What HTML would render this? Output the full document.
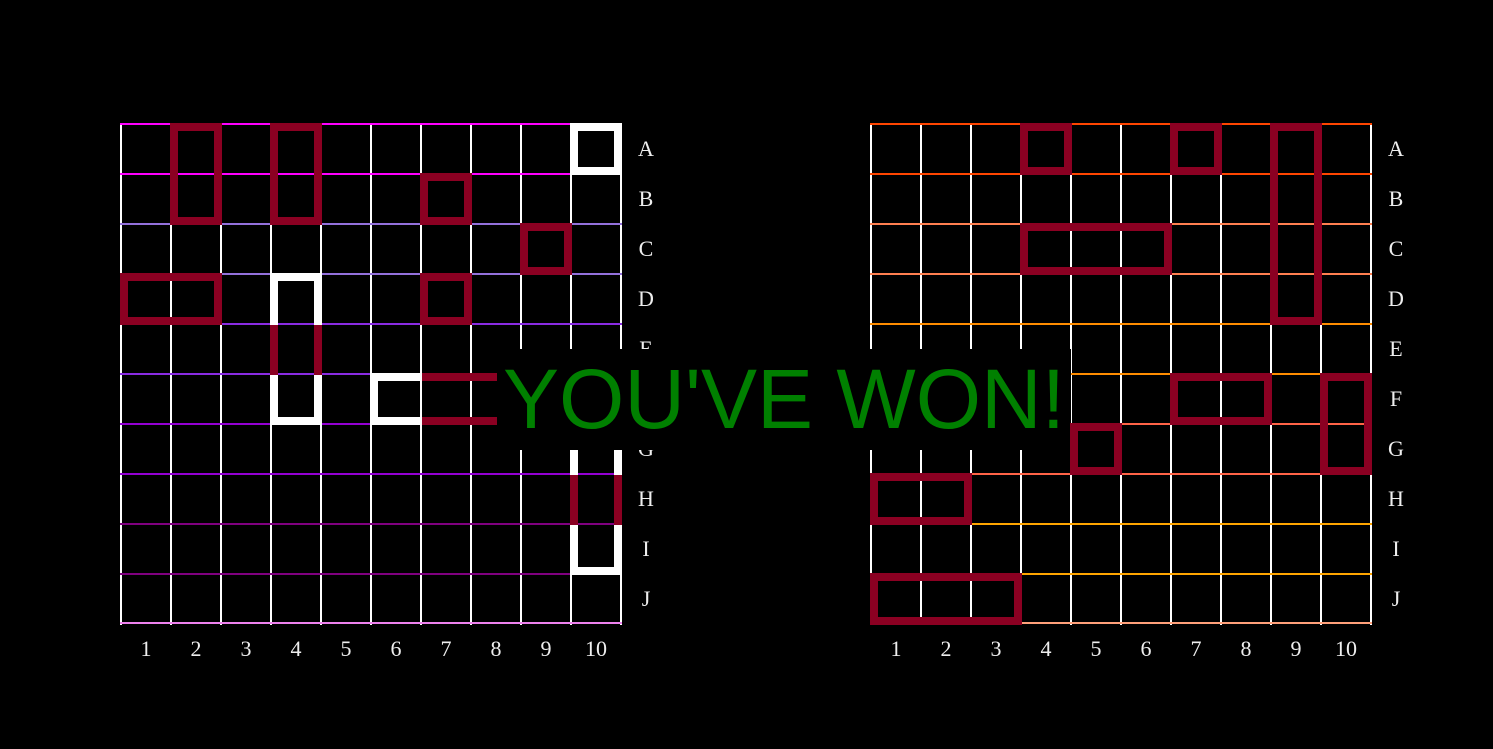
<!DOCTYPE html>
<html><head><meta charset="utf-8"><style>
html,body{margin:0;padding:0;background:#000;width:1493px;height:749px;overflow:hidden;position:relative}
div{position:absolute;box-sizing:border-box}
.v{width:2px;height:502px;background:#fff}
.h{height:2px;width:502px}
.s{border:8px solid #8b0022}
.w{border-color:#fff}
.lb{font-family:"Liberation Serif",serif;font-size:22px;color:#eee;width:40px;text-align:center;line-height:22px}
</style></head><body>
<!-- LEFT BOARD -->
<div class="v" style="left:120px;top:123px"></div><div class="v" style="left:170px;top:123px"></div><div class="v" style="left:220px;top:123px"></div><div class="v" style="left:270px;top:123px"></div><div class="v" style="left:320px;top:123px"></div><div class="v" style="left:370px;top:123px"></div><div class="v" style="left:420px;top:123px"></div><div class="v" style="left:470px;top:123px"></div><div class="v" style="left:520px;top:123px"></div><div class="v" style="left:570px;top:123px"></div><div class="v" style="left:620px;top:123px"></div>
<div class="h" style="left:120px;top:123px;background:#f0f"></div>
<div class="h" style="left:120px;top:173px;background:#f0f"></div>
<div class="h" style="left:120px;top:223px;background:#9370db"></div>
<div class="h" style="left:120px;top:273px;background:#9370db"></div>
<div class="h" style="left:120px;top:323px;background:#8a2be2"></div>
<div class="h" style="left:120px;top:373px;background:#8a2be2"></div>
<div class="h" style="left:120px;top:423px;background:#9400d3"></div>
<div class="h" style="left:120px;top:473px;background:#9400d3"></div>
<div class="h" style="left:120px;top:523px;background:#800080"></div>
<div class="h" style="left:120px;top:573px;background:#800080"></div>
<div class="h" style="left:120px;top:622px;background:#ee82ee"></div>
<!-- left ships -->
<div class="s" style="left:170px;top:123px;width:52px;height:102px"></div>
<div class="s" style="left:270px;top:123px;width:52px;height:102px"></div>
<div class="s w" style="left:570px;top:123px;width:52px;height:52px"></div>
<div class="s" style="left:420px;top:173px;width:52px;height:52px"></div>
<div class="s" style="left:520px;top:223px;width:52px;height:52px"></div>
<div class="s" style="left:120px;top:273px;width:102px;height:52px"></div>
<div class="s" style="left:420px;top:273px;width:52px;height:52px"></div>
<div class="s w" style="left:270px;top:273px;width:52px;height:52px;border-bottom:0"></div>
<div class="s" style="left:270px;top:325px;width:52px;height:50px;border-top:0;border-bottom:0"></div>
<div class="s w" style="left:270px;top:375px;width:52px;height:50px;border-top:0"></div>
<div class="s w" style="left:370px;top:373px;width:52px;height:52px;border-right:0"></div>
<div class="s" style="left:422px;top:373px;width:100px;height:52px;border-left:0;border-right:0"></div>
<div class="s w" style="left:570px;top:423px;width:52px;height:52px;border-bottom:0"></div>
<div class="s" style="left:570px;top:475px;width:52px;height:50px;border-top:0;border-bottom:0"></div>
<div class="s w" style="left:570px;top:525px;width:52px;height:50px;border-top:0"></div>
<!-- RIGHT BOARD -->
<div class="v" style="left:870px;top:123px"></div><div class="v" style="left:920px;top:123px"></div><div class="v" style="left:970px;top:123px"></div><div class="v" style="left:1020px;top:123px"></div><div class="v" style="left:1070px;top:123px"></div><div class="v" style="left:1120px;top:123px"></div><div class="v" style="left:1170px;top:123px"></div><div class="v" style="left:1220px;top:123px"></div><div class="v" style="left:1270px;top:123px"></div><div class="v" style="left:1320px;top:123px"></div><div class="v" style="left:1370px;top:123px"></div>
<div class="h" style="left:870px;top:123px;background:#ff4500"></div>
<div class="h" style="left:870px;top:173px;background:#ff4500"></div>
<div class="h" style="left:870px;top:223px;background:#ff7f50"></div>
<div class="h" style="left:870px;top:273px;background:#ff7f50"></div>
<div class="h" style="left:870px;top:323px;background:#ff8c00"></div>
<div class="h" style="left:870px;top:373px;background:#ff8c00"></div>
<div class="h" style="left:870px;top:423px;background:#ff6347"></div>
<div class="h" style="left:870px;top:473px;background:#ff6347"></div>
<div class="h" style="left:870px;top:523px;background:#ffa500"></div>
<div class="h" style="left:870px;top:573px;background:#ffa500"></div>
<div class="h" style="left:870px;top:622px;background:#ffa07a"></div>
<div class="s" style="left:1020px;top:123px;width:52px;height:52px"></div>
<div class="s" style="left:1170px;top:123px;width:52px;height:52px"></div>
<div class="s" style="left:1270px;top:123px;width:52px;height:202px"></div>
<div class="s" style="left:1020px;top:223px;width:152px;height:52px"></div>
<div class="s" style="left:1170px;top:373px;width:102px;height:52px"></div>
<div class="s" style="left:1320px;top:373px;width:52px;height:102px"></div>
<div class="s" style="left:870px;top:473px;width:102px;height:52px"></div>
<div class="s" style="left:870px;top:573px;width:152px;height:52px"></div>
<!-- letters -->
<div class="lb" style="left:626px;top:138px">A</div><div class="lb" style="left:626px;top:188px">B</div><div class="lb" style="left:626px;top:238px">C</div><div class="lb" style="left:626px;top:288px">D</div><div class="lb" style="left:626px;top:338px">E</div><div class="lb" style="left:626px;top:388px">F</div><div class="lb" style="left:626px;top:438px">G</div><div class="lb" style="left:626px;top:488px">H</div><div class="lb" style="left:626px;top:538px">I</div><div class="lb" style="left:626px;top:588px">J</div>
<div class="lb" style="left:1376px;top:138px">A</div><div class="lb" style="left:1376px;top:188px">B</div><div class="lb" style="left:1376px;top:238px">C</div><div class="lb" style="left:1376px;top:288px">D</div><div class="lb" style="left:1376px;top:338px">E</div><div class="lb" style="left:1376px;top:388px">F</div><div class="lb" style="left:1376px;top:438px">G</div><div class="lb" style="left:1376px;top:488px">H</div><div class="lb" style="left:1376px;top:538px">I</div><div class="lb" style="left:1376px;top:588px">J</div>
<!-- numbers -->
<div class="lb" style="left:126px;top:638px">1</div><div class="lb" style="left:176px;top:638px">2</div><div class="lb" style="left:226px;top:638px">3</div><div class="lb" style="left:276px;top:638px">4</div><div class="lb" style="left:326px;top:638px">5</div><div class="lb" style="left:376px;top:638px">6</div><div class="lb" style="left:426px;top:638px">7</div><div class="lb" style="left:476px;top:638px">8</div><div class="lb" style="left:526px;top:638px">9</div><div class="lb" style="left:576px;top:638px">10</div>
<div class="lb" style="left:876px;top:638px">1</div><div class="lb" style="left:926px;top:638px">2</div><div class="lb" style="left:976px;top:638px">3</div><div class="lb" style="left:1026px;top:638px">4</div><div class="lb" style="left:1076px;top:638px">5</div><div class="lb" style="left:1126px;top:638px">6</div><div class="lb" style="left:1176px;top:638px">7</div><div class="lb" style="left:1226px;top:638px">8</div><div class="lb" style="left:1276px;top:638px">9</div><div class="lb" style="left:1326px;top:638px">10</div>
<!-- overlay -->
<div style="left:497px;top:349px;width:574px;height:101px;background:#000"></div>
<div style="left:497px;top:349px;width:574px;height:101px;font-family:'Liberation Sans',sans-serif;font-size:84px;line-height:101px;color:#008000;text-align:center;white-space:nowrap">YOU'VE WON!</div>
<div class="s" style="left:1070px;top:423px;width:52px;height:52px"></div>
</body></html>
